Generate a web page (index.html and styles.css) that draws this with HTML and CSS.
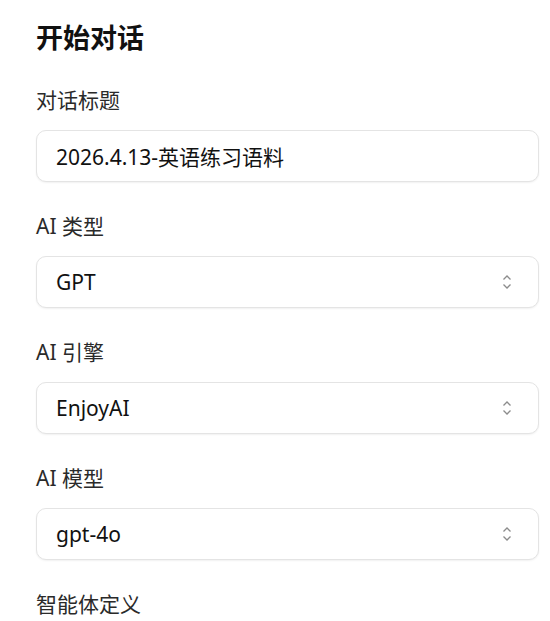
FILE: index.html
```html
<!DOCTYPE html>
<html lang="zh-CN">
<head>
<meta charset="UTF-8">
<title>开始对话</title>
<link rel="stylesheet" href="styles.css">
</head>
<body>

<div class="form">
    <h2 class="title">开始对话</h2>

    <div class="field">
        <label class="label">对话标题</label>
        <div class="box">
            <input class="control" type="text" value="2026.4.13-英语练习语料">
        </div>
    </div>

    <div class="field">
        <label class="label">AI 类型</label>
        <div class="box">
            <span class="control">GPT</span>
            <svg class="chevron" width="10" height="16" viewBox="0 0 10 16"><path d="M1.5 5.5 L5 2 L8.5 5.5 M1.5 10.5 L5 14 L8.5 10.5" fill="none" stroke="#8c8c8c" stroke-width="1.3"/></svg>
        </div>
    </div>

    <div class="field">
        <label class="label">AI 引擎</label>
        <div class="box">
            <span class="control">EnjoyAI</span>
            <svg class="chevron" width="10" height="16" viewBox="0 0 10 16"><path d="M1.5 5.5 L5 2 L8.5 5.5 M1.5 10.5 L5 14 L8.5 10.5" fill="none" stroke="#8c8c8c" stroke-width="1.3"/></svg>
        </div>
    </div>

    <div class="field">
        <label class="label">AI 模型</label>
        <div class="box">
            <span class="control">gpt-4o</span>
            <svg class="chevron" width="10" height="16" viewBox="0 0 10 16"><path d="M1.5 5.5 L5 2 L8.5 5.5 M1.5 10.5 L5 14 L8.5 10.5" fill="none" stroke="#8c8c8c" stroke-width="1.3"/></svg>
        </div>
    </div>

    <div class="field">
        <label class="label">智能体定义</label>
    </div>
</div>

</body>
</html>
```

FILE: styles.css
```css
* {
    box-sizing: border-box;
}

body {
    margin: 0;
    background-color: #ffffff;
    color: #1a1a1a;
    font-family: "Noto Sans", "Noto Sans CJK SC", sans-serif;
    overflow: hidden;
}

.form {
    padding: 20px 11px 0 36px;
    display: flex;
    flex-direction: column;
    gap: 30px;
}

.title {
    margin: 0;
    font-size: 27px;
    line-height: 36px;
    font-weight: 700;
    color: #111111;
}

.field {
    display: flex;
    flex-direction: column;
    gap: 16px;
}

.label {
    font-size: 21px;
    line-height: 28px;
    color: #2a2a2a;
}

.box {
    display: flex;
    align-items: center;
    height: 52px;
    padding: 0 26px 0 19px;
    border: 1px solid #e4e4e4;
    border-radius: 10px;
    background-color: #ffffff;
    box-shadow: 0 1px 2px rgba(0, 0, 0, 0.06);
}

.control {
    flex: 1;
    min-width: 0;
    border: none;
    outline: none;
    padding: 0;
    background: transparent;
    font-family: inherit;
    font-size: 21px;
    color: #111111;
}

.chevron {
    flex: none;
}
```
